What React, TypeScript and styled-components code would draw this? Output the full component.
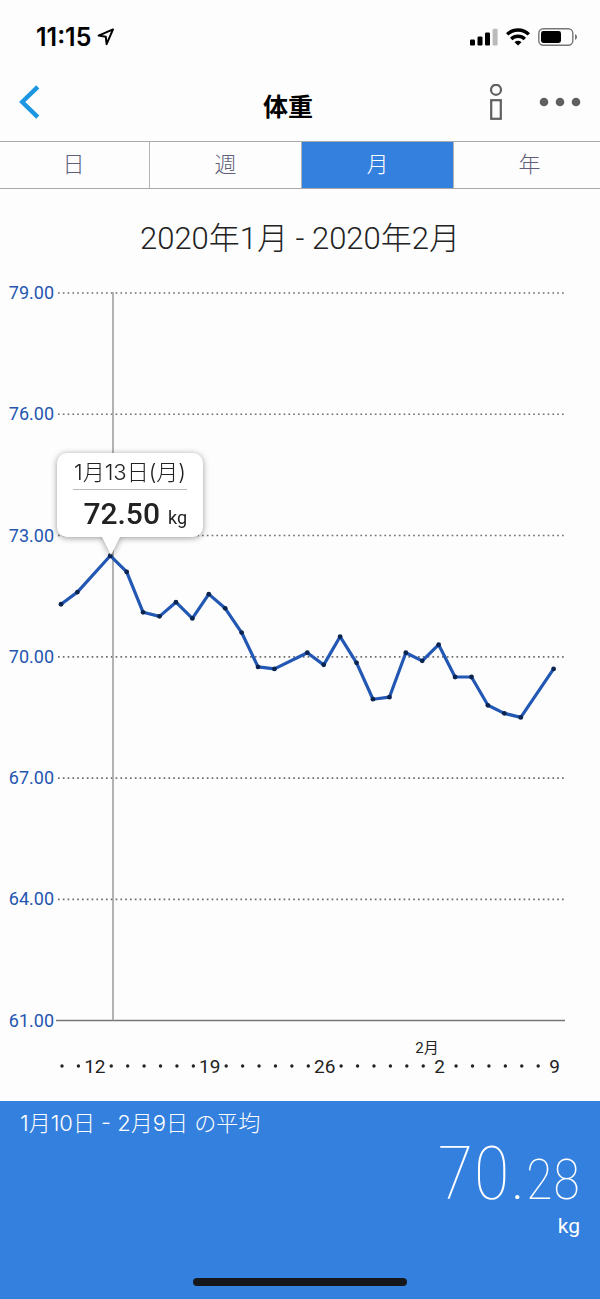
import React from "react";
import styled, { createGlobalStyle } from "styled-components";

const GlobalStyle = createGlobalStyle`
  *, *::before, *::after { box-sizing: border-box; }
  body { margin: 0; background: #fdfdfd; }
  button { font: inherit; color: inherit; background: none; border: 0; padding: 0; cursor: pointer; }
`;

const din = `"Roboto Condensed", Roboto, "Noto Sans CJK JP", sans-serif`;
const dinWide = `Roboto, "Noto Sans CJK JP", sans-serif`;
const system = `Inter, "Noto Sans CJK JP", sans-serif`;

const Page = styled.div`
  display: flex;
  flex-direction: column;
  min-height: 100vh;
  overflow: hidden;
  color: #222;
  font-family: ${system};
`;

const StatusBar = styled.div`
  display: flex;
  align-items: center;
  justify-content: space-between;
  height: 72px;
  padding: 2px 22px 0 36px;
  color: #000;
`;

const StatusGroup = styled.div<{ $gap: number }>`
  display: flex;
  align-items: center;
  gap: ${(p) => p.$gap}px;
`;

const Clock = styled.span`
  font-size: 25px;
  line-height: 28px;
  font-weight: 600;
`;

const Header = styled.header`
  display: grid;
  grid-template-columns: 1fr auto 1fr;
  height: 69px;
  padding: 8px 19px 0;
`;

const Title = styled.h1`
  margin: 0;
  padding: 11px 24px 0 0;
  color: #000;
  font-size: 25px;
  line-height: 32px;
  font-weight: 700;
`;

const IconButton = styled.button`
  display: flex;
  align-items: center;
  height: 44px;
`;

const Actions = styled.div`
  display: flex;
  justify-content: flex-end;
  gap: 36px;
`;

const Tabs = styled.nav`
  display: grid;
  grid-template-columns: repeat(4, 1fr);
  height: 48px;
  margin: 0 -6px 0 -2px;
  border: 1px solid #a9a9a9;
  border-width: 1px 0;
`;

const Tab = styled.button<{ $active?: boolean }>`
  padding: 0 0 2px;
  border-right: 1px solid #b4b4b4;
  background: ${(p) => (p.$active ? "#3480de" : "transparent")};
  color: ${(p) => (p.$active ? "#fff" : "#5d6078")};
  font-size: 22px;
  line-height: 28px;
  font-weight: 300;
`;

const Period = styled.h2`
  margin: 0;
  padding: 28px 0 10px;
  font-family: ${dinWide};
  font-size: 31px;
  line-height: 44px;
  font-weight: 300;
  text-align: center;
`;

const ChartArea = styled.section`
  position: relative;
`;

const Chart = styled.svg`
  display: block;
  width: 100%;
  height: auto;
`;

const AxisValue = styled.text`
  fill: #2456b0;
  font-family: ${dinWide};
  font-size: 18px;
  text-anchor: end;
`;

const DayText = styled.text`
  fill: #222;
  font-family: ${dinWide};
  font-size: 19px;
  text-anchor: middle;
`;

const MonthText = styled(DayText)`
  font-size: 15px;
`;

const Tooltip = styled.div`
  position: absolute;
  left: 9.5%;
  top: 21.9%;
  width: 146px;
  height: 84px;
  padding: 4px 16px;
  border-radius: 10px;
  background: #fff;
  filter: drop-shadow(0 1px 3px rgba(0, 0, 0, 0.4));

  &::after {
    content: "";
    position: absolute;
    left: 45px;
    top: 84px;
    border: solid transparent;
    border-width: 18px 9px 0;
    border-top-color: #fff;
  }
`;

const TooltipDate = styled.div`
  display: flex;
  justify-content: center;
  height: 33px;
  border-bottom: 1px solid #bbb;
  font-size: 22px;
  line-height: 30px;
  font-weight: 300;
  white-space: nowrap;
`;

const TooltipValue = styled.div`
  font-family: ${dinWide};
  font-size: 30px;
  line-height: 48px;
  font-weight: 500;
  text-align: right;
  white-space: nowrap;
`;

const TooltipUnit = styled.span`
  margin-left: 8px;
  font-size: 18px;
  font-weight: 400;
`;

const Summary = styled.footer`
  display: flex;
  flex: 1;
  flex-direction: column;
  min-height: 198px;
  padding: 4px 20px 13px;
  background: #3480de;
  color: #fff;
`;

const SummaryLabel = styled.div`
  font-size: 22px;
  line-height: 36px;
  font-weight: 300;
`;

const Average = styled.div`
  font-family: ${din};
  font-size: 75px;
  line-height: 64px;
  font-weight: 100;
  text-align: right;
`;

const AverageFraction = styled.span`
  font-size: 56px;
`;

const AverageUnit = styled.div`
  font-family: ${dinWide};
  font-size: 21px;
  line-height: 28px;
  text-align: right;
`;

const HomeIndicator = styled.div`
  width: 214px;
  height: 8px;
  margin: auto auto 0;
  border-radius: 4px;
  background: #15171c;
`;

const readings: [number, number][] = [
  [0, 71.3], [1, 71.6], [3, 72.5], [4, 72.1], [5, 71.1], [6, 71.0], [7, 71.35],
  [8, 70.95], [9, 71.55], [10, 71.2], [11, 70.6], [12, 69.75], [13, 69.7],
  [15, 70.1], [16, 69.8], [17, 70.5], [18, 69.85], [19, 68.95], [20, 69.0],
  [21, 70.1], [22, 69.9], [23, 70.3], [24, 69.5], [25, 69.5], [26, 68.8],
  [27, 68.6], [28, 68.5], [30, 69.7],
];

const gridValues = [79, 76, 73, 70, 67, 64, 61];
const dayLabels: Record<number, string> = { 2: "12", 9: "19", 16: "26", 23: "2", 30: "9" };

const dayX = (day: number) => 61 + day * 16.42;
const valueY = (value: number) => 22 + (79 - value) * 40.42;

function WeightChart() {
  return (
    <Chart viewBox="0 0 600 830" role="img" aria-label="体重">
      {gridValues.map((v) => (
        <g key={v}>
          <AxisValue x="54" y={valueY(v) + 6}>{v.toFixed(2)}</AxisValue>
          {v === 61 ? (
            <line x1="56" x2="565" y1={valueY(v)} y2={valueY(v)} stroke="#777" strokeWidth="1.5" />
          ) : (
            <line x1="58" x2="564" y1={valueY(v)} y2={valueY(v)} stroke="#707070" strokeWidth="1.7" strokeDasharray="1.7 3.1" />
          )}
        </g>
      ))}
      <line x1="113" x2="113" y1="21" y2={valueY(61)} stroke="#999" strokeWidth="1.5" />
      <polyline
        points={readings.map(([d, v]) => `${dayX(d)},${valueY(v)}`).join(" ")}
        fill="none"
        stroke="#2257b3"
        strokeWidth="3.2"
        strokeLinejoin="round"
      />
      {readings.map(([d, v]) => (
        <circle key={d} cx={dayX(d)} cy={valueY(v)} r="2.4" fill="#0c2450" />
      ))}
      {Array.from({ length: 31 }, (_, d) =>
        dayLabels[d] ? (
          <DayText key={d} x={dayX(d) + 1} y="802">{dayLabels[d]}</DayText>
        ) : (
          <circle key={d} cx={dayX(d) + 1} cy="795" r="1.7" fill="#222" />
        )
      )}
      <MonthText x="427" y="782">2月</MonthText>
    </Chart>
  );
}

export default function App() {
  return (
    <Page>
      <GlobalStyle />
      <StatusBar>
        <StatusGroup $gap={6}>
          <Clock>11:15</Clock>
          <svg width="18" height="18" viewBox="0 0 18 18" fill="none" stroke="#000" strokeWidth="2" strokeLinejoin="round">
            <path d="M16 1.4 1.6 7.6l7.2 1.2.8 7.4z" />
          </svg>
        </StatusGroup>
        <StatusGroup $gap={8}>
          <svg width="28" height="18" viewBox="0 0 28 18">
            <rect x="0" y="11.5" width="5" height="6" rx="1.2" />
            <rect x="7.5" y="8.5" width="5" height="9" rx="1.2" />
            <rect x="15" y="4.5" width="5" height="13" rx="1.2" />
            <rect x="22.6" y="0.8" width="5" height="16.7" rx="1.2" fill="#bbb" />
          </svg>
          <svg width="24" height="18" viewBox="0 0 24 18" fill="none" stroke="#000" strokeWidth="3.4">
            <path d="M1.2 6.4a15.4 15.4 0 0 1 21.6 0" />
            <path d="M5.2 11a9.7 9.7 0 0 1 13.6 0" />
            <path d="M12 17.6 8.5 14.2a5 5 0 0 1 7 0z" fill="#000" stroke="none" />
          </svg>
          <svg width="40" height="18" viewBox="0 0 40 18">
            <rect x="0.8" y="0.8" width="34" height="16.4" rx="4.5" fill="none" stroke="#777" strokeWidth="1.4" />
            <rect x="3" y="3" width="20" height="12" rx="2.4" />
            <path d="M37 6a3.2 3.2 0 0 1 0 6z" fill="#777" />
          </svg>
        </StatusGroup>
      </StatusBar>
      <Header>
        <div>
          <IconButton aria-label="戻る">
            <svg width="22" height="34" viewBox="0 0 22 34" fill="none" stroke="#1c96e0" strokeWidth="4.4">
              <path d="M18.8 1.8 3.2 17 18.8 32.2" />
            </svg>
          </IconButton>
        </div>
        <Title>体重</Title>
        <Actions>
          <IconButton aria-label="情報">
            <svg width="14" height="36" viewBox="0 0 14 36" fill="none" stroke="#606060" strokeWidth="2.2">
              <circle cx="7" cy="5.8" r="5" />
              <rect x="2.2" y="16.2" width="9.6" height="18.6" />
            </svg>
          </IconButton>
          <IconButton aria-label="メニュー">
            <svg width="42" height="10" viewBox="0 0 42 10" fill="#606060">
              <circle cx="5" cy="5" r="4.3" />
              <circle cx="21" cy="5" r="4.3" />
              <circle cx="37" cy="5" r="4.3" />
            </svg>
          </IconButton>
        </Actions>
      </Header>
      <Tabs>
        <Tab>日</Tab>
        <Tab>週</Tab>
        <Tab $active aria-pressed="true">月</Tab>
        <Tab>年</Tab>
      </Tabs>
      <Period>2020年1月 - 2020年2月</Period>
      <ChartArea>
        <WeightChart />
        <Tooltip>
          <TooltipDate>1月13日(月)</TooltipDate>
          <TooltipValue>
            72.50<TooltipUnit>kg</TooltipUnit>
          </TooltipValue>
        </Tooltip>
      </ChartArea>
      <Summary>
        <SummaryLabel>1月10日 - 2月9日 の平均</SummaryLabel>
        <Average>
          70.<AverageFraction>28</AverageFraction>
        </Average>
        <AverageUnit>kg</AverageUnit>
        <HomeIndicator />
      </Summary>
    </Page>
  );
}
